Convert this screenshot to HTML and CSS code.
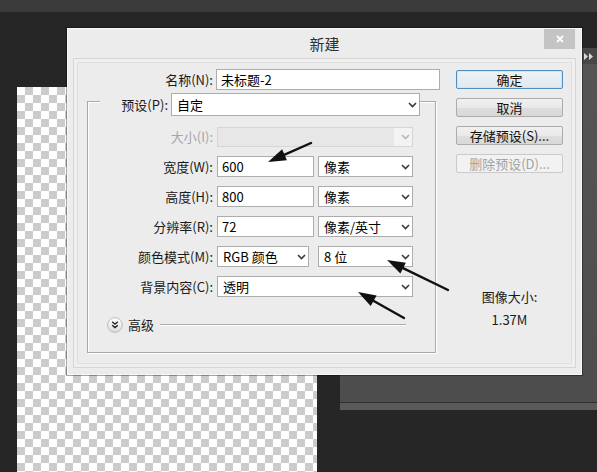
FILE: index.html
```html
<!DOCTYPE html>
<html lang="zh-CN">
<head>
<meta charset="utf-8">
<title>新建</title>
<link rel="stylesheet" href="styles.css">
</head>
<body>
<div class="app">
  <div class="topbar"></div>
  <div class="workspace">
    <div class="canvas"></div>
    <div class="panel">
      <div class="panel-tab">
        <svg width="9" height="7" viewBox="0 0 9 7"><path d="M0 0l4 3.5L0 7zM5 0l4 3.5L5 7z" fill="#d8d8d8"/></svg>
      </div>
      <div class="panel-body"></div>
      <div class="panel-foot"></div>
    </div>

    <div class="dialog">
      <div class="titlebar">
        <span class="title">新建</span>
        <span class="close"><svg width="8" height="8" viewBox="0 0 8 8"><path d="M1 1l6 6M7 1l-6 6" stroke="#fff" stroke-width="1.8"/></svg></span>
      </div>
      <div class="client">
        <div class="form">
          <div class="name-row">
            <span class="lbl lbl-name">名称(N):</span>
            <div class="input w-name">未标题-2</div>
          </div>

          <div class="group">
            <div class="group-head">
              <span class="lbl lbl-preset">预设(P):</span>
              <div class="select w-preset"><span class="val">自定</span><svg class="chev" width="9" height="6" viewBox="0 0 9 6"><path d="M1 1l3.5 3.5L8 1" fill="none" stroke="#3a3a3a" stroke-width="1.6"/></svg></div>
            </div>

            <div class="grow first">
              <span class="lbl lbl-g disabled-text">大小(I):</span>
              <div class="select select-disabled w-full"><span class="dis-fill"></span><svg class="chev" width="9" height="6" viewBox="0 0 9 6"><path d="M1 1l3.5 3.5L8 1" fill="none" stroke="#b8b8b8" stroke-width="1.6"/></svg></div>
            </div>

            <div class="grow">
              <span class="lbl lbl-g">宽度(W):</span>
              <div class="input w-num">600</div>
              <div class="select w-unit"><span class="val">像素</span><svg class="chev" width="9" height="6" viewBox="0 0 9 6"><path d="M1 1l3.5 3.5L8 1" fill="none" stroke="#3a3a3a" stroke-width="1.6"/></svg></div>
            </div>

            <div class="grow">
              <span class="lbl lbl-g">高度(H):</span>
              <div class="input w-num">800</div>
              <div class="select w-unit"><span class="val">像素</span><svg class="chev" width="9" height="6" viewBox="0 0 9 6"><path d="M1 1l3.5 3.5L8 1" fill="none" stroke="#3a3a3a" stroke-width="1.6"/></svg></div>
            </div>

            <div class="grow">
              <span class="lbl lbl-g">分辨率(R):</span>
              <div class="input w-num">72</div>
              <div class="select w-unit"><span class="val">像素/英寸</span><svg class="chev" width="9" height="6" viewBox="0 0 9 6"><path d="M1 1l3.5 3.5L8 1" fill="none" stroke="#3a3a3a" stroke-width="1.6"/></svg></div>
            </div>

            <div class="grow">
              <span class="lbl lbl-g">颜色模式(M):</span>
              <div class="select w-mode"><span class="val">RGB 颜色</span><svg class="chev" width="9" height="6" viewBox="0 0 9 6"><path d="M1 1l3.5 3.5L8 1" fill="none" stroke="#3a3a3a" stroke-width="1.6"/></svg></div>
              <div class="select w-unit"><span class="val">8 位</span><svg class="chev" width="9" height="6" viewBox="0 0 9 6"><path d="M1 1l3.5 3.5L8 1" fill="none" stroke="#3a3a3a" stroke-width="1.6"/></svg></div>
            </div>

            <div class="grow">
              <span class="lbl lbl-g">背景内容(C):</span>
              <div class="select w-full"><span class="val">透明</span><svg class="chev" width="9" height="6" viewBox="0 0 9 6"><path d="M1 1l3.5 3.5L8 1" fill="none" stroke="#3a3a3a" stroke-width="1.6"/></svg></div>
            </div>

            <div class="advanced">
              <span class="adv-btn">
                <svg width="16" height="16" viewBox="0 0 16 16">
                  <defs><linearGradient id="advg" x1="0" y1="0" x2="0" y2="1"><stop offset="0" stop-color="#ffffff"/><stop offset="1" stop-color="#d9d9d9"/></linearGradient></defs>
                  <circle cx="8" cy="8" r="7.4" fill="url(#advg)" stroke="#bdbdbd" stroke-width="1"/>
                  <path d="M5.2 4.8l2.8 2.4 2.8-2.4M5.2 8.2l2.8 2.4 2.8-2.4" fill="none" stroke="#1e1e1e" stroke-width="1.4"/>
                </svg>
              </span>
              <span class="adv-text">高级</span>
              <span class="adv-line"></span>
            </div>
          </div>
        </div>

        <div class="side">
          <div class="btn btn-default">确定</div>
          <div class="btn">取消</div>
          <div class="btn">存储预设(S)...</div>
          <div class="btn btn-disabled">删除预设(D)...</div>
          <div class="info">
            <div class="info-line">图像大小:</div>
            <div class="info-line info-val">1.37M</div>
          </div>
        </div>
      </div>
    </div>
  </div>

  <svg class="arrows" width="597" height="472" viewBox="0 0 597 472">
    <g stroke="#111" stroke-width="2.4" stroke-linecap="round">
      <line x1="311" y1="143" x2="283" y2="155.3"/>
      <line x1="448" y1="290" x2="401.5" y2="267.4"/>
      <line x1="404" y1="318" x2="372" y2="300"/>
    </g>
    <g fill="#111">
      <polygon points="268,162 282.1,149.2 286.9,160.2"/>
      <polygon points="387,260 405.8,262.8 400.4,273.6"/>
      <polygon points="358,292 376.6,295.6 370.7,306.1"/>
    </g>
  </svg>
</div>
</body>
</html>
```

FILE: styles.css
```css
* { box-sizing: border-box; }

html, body {
  margin: 0;
  padding: 0;
}

body {
  background: #262626;
  font-family: "Noto Sans CJK SC", "Noto Sans", "Liberation Sans", sans-serif;
  font-size: 13px;
  color: #1b1b1b;
}

.app {
  position: relative;
  width: 597px;
  height: 472px;
  overflow: hidden;
}

.topbar {
  height: 12px;
  background: #3b3b3b;
}

.workspace {
  position: relative;
  height: 460px;
}

/* transparent document canvas */
.canvas {
  position: absolute;
  left: 17px;
  top: 75px;
  width: 300px;
  bottom: 0;
  background-color: #fff;
  background-image: conic-gradient(#cccccc 25%, #ffffff 0 50%, #cccccc 0 75%, #ffffff 0);
  background-size: 16px 16px;
}

/* right side panel */
.panel {
  position: absolute;
  left: 340px;
  top: 36px;
  right: 0;
  height: 362px;
  display: flex;
  flex-direction: column;
}

.panel-tab {
  height: 16px;
  background: #474747;
  display: flex;
  justify-content: flex-end;
  align-items: center;
  padding-right: 4px;
}

.panel-body {
  flex: 1;
  background: linear-gradient(#555555, #4d4d4d);
}

.panel-foot {
  height: 8px;
  border-top: 1px solid #303030;
  background: #5a5a5a;
}

/* dialog */
.dialog {
  position: absolute;
  left: 67px;
  top: 16px;
  width: 515px;
  height: 347px;
  background: #ececec;
  border: 1px solid #f8f8f8;
  box-shadow: 0 0 0 1px rgba(0, 0, 0, 0.35);
  display: flex;
  flex-direction: column;
}

.titlebar {
  position: relative;
  height: 29px;
  display: flex;
  align-items: center;
  justify-content: center;
}

.title {
  font-size: 15px;
  line-height: 20px;
  color: #303030;
}

.close {
  position: absolute;
  top: 0;
  right: 6px;
  width: 31px;
  height: 20px;
  background: #c4c4c4;
  display: flex;
  align-items: center;
  justify-content: center;
}

.client {
  flex: 1;
  margin: 0 5px 6px 5px;
  border: 1px solid #d6d6d6;
  box-shadow: inset 0 0 0 3px #efefef, inset 0 0 0 4px #e0e0e0;
  display: flex;
  align-items: flex-start;
  padding-top: 10px;
}

.form {
  width: 366px;
}

.lbl {
  flex: none;
  text-align: right;
  line-height: 20px;
  white-space: nowrap;
}

.disabled-text { color: #a6a6a6; }

.name-row {
  display: flex;
  align-items: center;
  height: 21px;
}

.lbl-name {
  width: 139px;
  margin-right: 3px;
}

.input {
  flex: none;
  height: 21px;
  border: 1px solid #adadad;
  background: #fff;
  padding-left: 4px;
  display: flex;
  align-items: center;
  color: #000;
  line-height: 18px;
  white-space: nowrap;
}

.select {
  flex: none;
  height: 21px;
  border: 1px solid #acacac;
  background: #fff;
  padding-left: 5px;
  display: flex;
  align-items: center;
  color: #000;
  line-height: 18px;
  white-space: nowrap;
}

.select .chev {
  flex: none;
  margin-left: auto;
  margin-right: 2px;
}

.select-disabled {
  border-color: #d6d6d6;
  background: #f3f3f3;
  padding-left: 0;
  height: 20px;
}

.dis-fill {
  align-self: stretch;
  width: 176px;
  background: #e7e7e7;
}

.w-name { width: 224px; }
.w-preset { width: 249px; height: 23px; }
.w-full { width: 196px; }
.w-num { width: 97px; margin-right: 4px; }
.w-unit { width: 95px; }
.w-mode { width: 92px; margin-right: 9px; }

/* group box */
.group {
  margin-top: 11px;
  margin-left: 13px;
  width: 349px;
  height: 252px;
  border: 1px solid #a9a9a9;
  box-shadow: 1px 1px 0 #ffffff, inset 1px 1px 0 #ffffff;
}

.group-head {
  display: flex;
  align-items: center;
  width: 320px;
  margin-top: -9px;
  margin-left: 12px;
  background: #ececec;
}

.lbl-preset {
  width: 68px;
  margin-right: 3px;
}

.grow {
  display: flex;
  align-items: center;
  height: 21px;
  margin-top: 9px;
}

.grow.first { margin-top: 10px; }

.lbl-g {
  width: 125px;
  margin-right: 4px;
}

.advanced {
  display: flex;
  align-items: center;
  height: 16px;
  margin-top: 20px;
  padding-left: 19px;
}

.adv-btn {
  display: flex;
  width: 16px;
  height: 16px;
}

.adv-text {
  margin-left: 5px;
  font-size: 13px;
  line-height: 16px;
}

.adv-line {
  width: 246px;
  margin-left: 6px;
  height: 2px;
  border-top: 1px solid #ababab;
  border-bottom: 1px solid #ffffff;
}

/* right column */
.side {
  width: 107px;
  margin-left: 16px;
  margin-top: 1px;
  display: flex;
  flex-direction: column;
}

.btn {
  height: 19px;
  margin-bottom: 9px;
  border: 1px solid #acacac;
  border-radius: 2px;
  background: linear-gradient(#f1f1f1, #e9e9e9 50%, #dedede 51%, #d8d8d8);
  display: flex;
  align-items: center;
  justify-content: center;
  line-height: 17px;
  color: #111;
  white-space: nowrap;
}

.btn-default {
  border-color: #4f8fc4;
  background: linear-gradient(#eef2f5, #e2e8ec);
  box-shadow: inset 0 0 0 1px #cfe6f6;
}

.btn-disabled {
  border-color: #cacaca;
  background: #f2f2f2;
  color: #a3a3a3;
}

.info {
  margin-top: 106px;
  display: flex;
  flex-direction: column;
  align-items: center;
}

.info-line {
  line-height: 18px;
  color: #1b1b1b;
}

.info-val {
  margin-top: 5px;
}

/* annotation arrows */
.arrows {
  position: absolute;
  left: 0;
  top: 0;
  pointer-events: none;
}
```
